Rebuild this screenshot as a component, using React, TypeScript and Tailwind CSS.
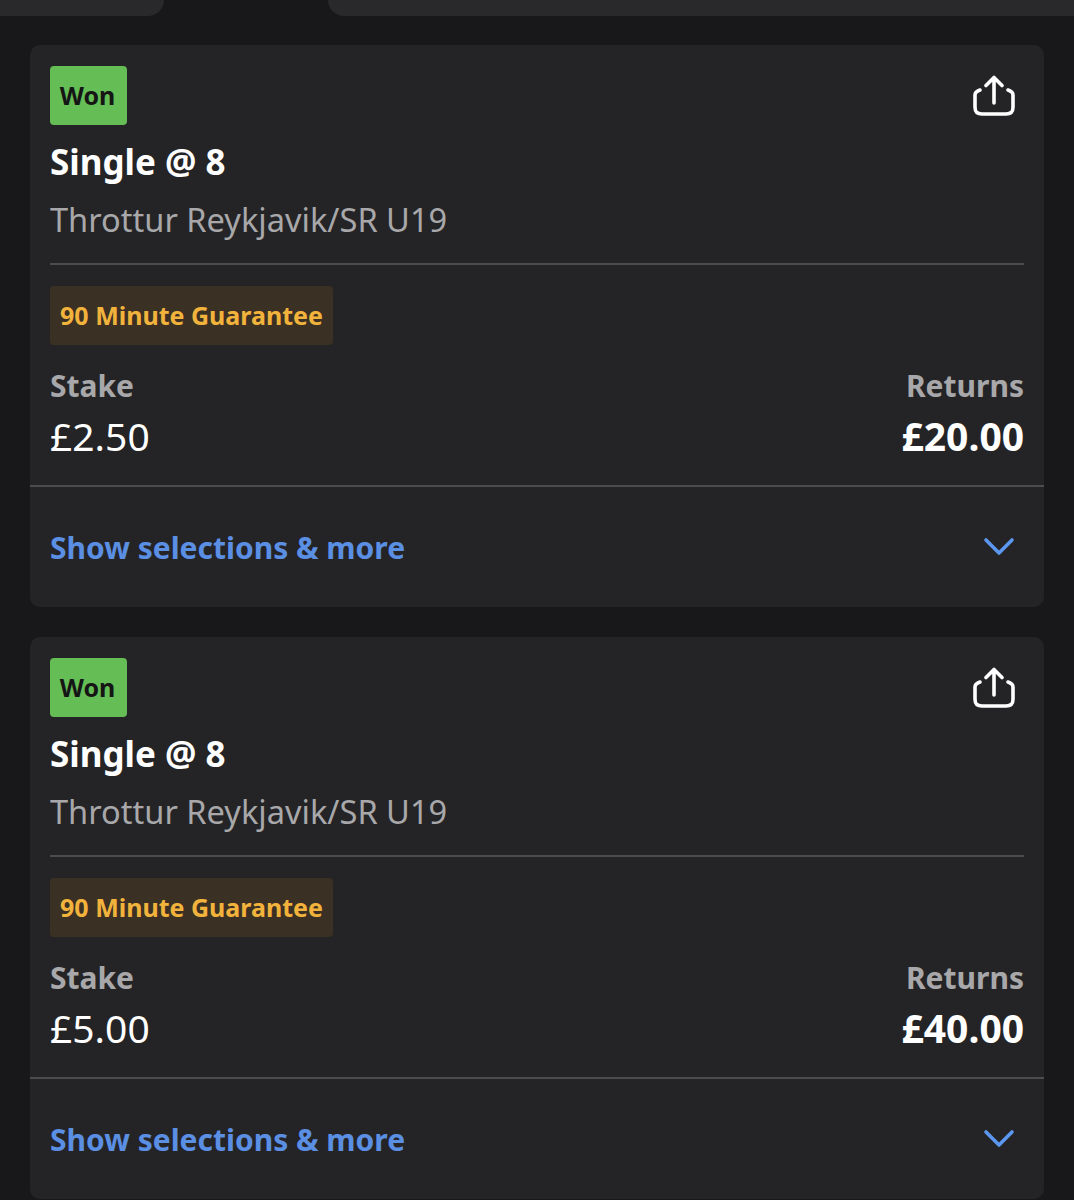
const font = { fontFamily: '"Noto Sans", sans-serif' };

function Card({ stake, returns }: { stake: string; returns: string }) {
  return (
    <div className="h-[562px] rounded-[10px] bg-[#242426] flex flex-col">
      <div className="px-5 pt-[21px] flex flex-col">
        <div className="flex justify-between items-start">
          <span className="h-[59px] w-[77px] pr-[2px] rounded-[4px] bg-[#64bd55] text-[#151515] text-[25px] font-bold flex items-center justify-center">Won</span>
          <svg className="mr-[9px] mt-[9px]" width="42" height="42" viewBox="0 0 42 42" fill="none" stroke="#fff" strokeWidth="3.6" strokeLinecap="round" strokeLinejoin="round">
            <path d="M21 28V3M13 10.5l8-8 8 8" />
            <path d="M7 15c-3 1-5 2-5 5v12c0 5 2 7 7 7h24c5 0 7-2 7-7V20c0-3-2-4-5-5" />
          </svg>
        </div>
        <div className="mt-[12px] h-[50px] leading-[50px] text-[35px] font-bold text-white">Single @ 8</div>
        <div className="mt-[8px] h-[50px] leading-[49px] text-[32.6px] text-[#a8a8aa]">Throttur Reykjavik/SR U19</div>
        <div className="mt-[18px] h-[2px] bg-[#4c4c4e]" />
        <span className="mt-[21px] h-[59px] w-[283px] rounded-[4px] bg-[#3a3023] text-[#f2b33d] text-[25px] font-bold flex items-center justify-center">90 Minute Guarantee</span>
        <div className="mt-[19px] flex justify-between items-start">
          <div className="flex flex-col">
            <span className="h-[46px] leading-[44px] text-[30px] font-bold text-[#a8a8aa]">Stake</span>
            <span className="h-[52px] leading-[52px] text-[39px] text-white">{stake}</span>
          </div>
          <div className="flex flex-col items-end">
            <span className="h-[46px] leading-[44px] text-[30px] font-bold text-[#a8a8aa]">Returns</span>
            <span className="h-[52px] leading-[52px] text-[39px] font-bold text-white">{returns}</span>
          </div>
        </div>
      </div>
      <div className="mt-[23px] h-[2px] bg-[#4c4c4e]" />
      <div className="pl-5 pr-[29px] flex-1 flex items-center justify-between">
        <span className="text-[#5b8fe3] text-[30px] font-bold">Show selections &amp; more</span>
        <svg className="mb-[1px]" width="32" height="20" viewBox="0 0 32 20" fill="none" stroke="#5b97ee" strokeWidth="3.6" strokeLinecap="round" strokeLinejoin="round">
          <path d="M3 3l13 13L29 3" />
        </svg>
      </div>
    </div>
  );
}

export default function App() {
  return (
    <div className="h-[1200px] w-[1074px] overflow-hidden bg-[#18181a]" style={font}>
      <div className="flex h-[16px]">
        <div className="w-[164px] rounded-br-[18px] bg-[#29292b]" />
        <div className="ml-[164px] flex-1 rounded-bl-[18px] bg-[#29292b]" />
      </div>
      <div className="mt-[29px] mx-[30px] flex flex-col gap-[30px]">
        <Card stake="£2.50" returns="£20.00" />
        <Card stake="£5.00" returns="£40.00" />
      </div>
    </div>
  );
}
